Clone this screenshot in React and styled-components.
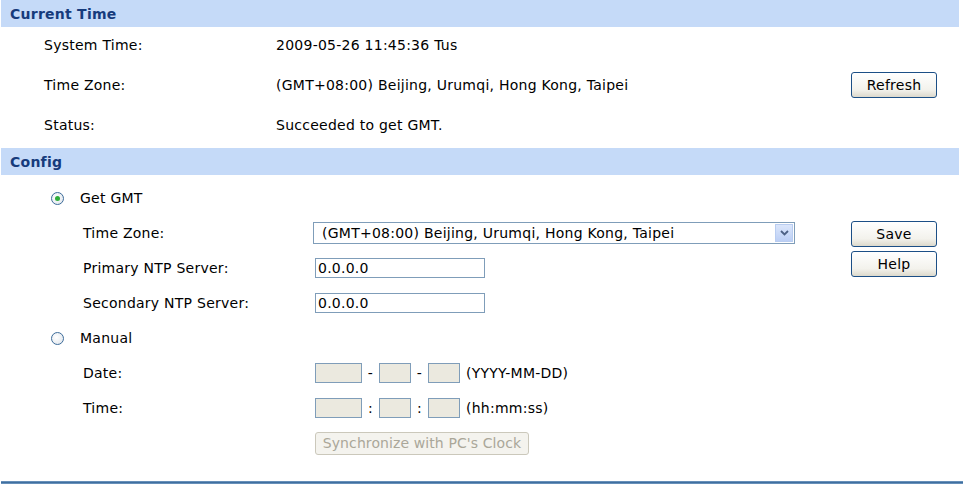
import styled, { createGlobalStyle } from "styled-components";

const GlobalStyle = createGlobalStyle`
  body {
    margin: 0;
    background: #ffffff;
    font-family: "DejaVu Sans", Verdana, sans-serif;
    font-size: 14px;
    letter-spacing: 0.25px;
    color: #000000;
  }
`;

const Page = styled.div`
  width: 964px;
  height: 488px;
  overflow: hidden;
`;

const SectionHeader = styled.div`
  height: 27px;
  margin: 0 5px 0 1px;
  padding-left: 9px;
  display: flex;
  align-items: center;
  background: #c5daf8;
  color: #163b7c;
  font-weight: bold;
  font-size: 14px;
`;

const InfoGrid = styled.div`
  display: grid;
  grid-template-columns: 232px 1fr 86px;
  grid-auto-rows: 26px;
  row-gap: 14px;
  align-items: center;
  padding: 5px 27px 10px 44px;
`;

const Cell = styled.div`
  white-space: nowrap;
`;

const Button = styled.button`
  width: ${(p) => p.$width || 86}px;
  height: ${(p) => p.$height || 26}px;
  padding: 0;
  border: 1px solid #1c4f86;
  border-radius: 3px;
  background: linear-gradient(#ffffff, #f3f2ec 70%, #dcd9cc);
  font-family: "DejaVu Sans", Verdana, sans-serif;
  font-size: 14px;
  letter-spacing: 0.25px;
  color: #000000;
`;

const DisabledButton = styled.button`
  width: 214px;
  height: 23px;
  padding: 0;
  border: 1px solid #cbc8bb;
  border-radius: 3px;
  background: #f4f3ee;
  color: #aaa799;
  font-family: "DejaVu Sans", Verdana, sans-serif;
  font-size: 14px;
  letter-spacing: 0.1px;
  white-space: nowrap;
`;

const ConfigBody = styled.div`
  display: flex;
  padding: 11px 27px 0 0;
`;

const ConfigMain = styled.div`
  flex: 1;
  display: grid;
  grid-template-columns: 264px 1fr;
  grid-auto-rows: 24px;
  row-gap: 11px;
  align-items: center;
  padding-left: 51px;
`;

const SideButtons = styled.div`
  display: flex;
  flex-direction: column;
  gap: 4px;
  padding-top: 35px;
`;

const RadioRow = styled.label`
  grid-column: 1 / -1;
  display: flex;
  align-items: center;
  gap: 16px;
`;

const Radio = styled.span`
  width: 11px;
  height: 11px;
  border-radius: 50%;
  border: 1px solid #3d6c9a;
  background: radial-gradient(circle at 40% 40%, #ffffff, #dde3ea);
  display: flex;
  align-items: center;
  justify-content: center;

  &::after {
    content: "";
    width: 5px;
    height: 5px;
    border-radius: 50%;
    background: ${(p) => (p.$checked ? "#2fae3a" : "transparent")};
  }
`;

const SubLabel = styled.div`
  padding-left: 32px;
  white-space: nowrap;
`;

const Control = styled.div`
  display: flex;
  align-items: center;
  white-space: nowrap;
`;

const SelectBox = styled.div`
  width: 482px;
  height: 22px;
  margin-left: -2px;
  box-sizing: border-box;
  border: 1px solid #7f9db9;
  background: #ffffff;
  display: flex;
  align-items: center;
  justify-content: space-between;
  padding: 0 1px 0 8px;
`;

const SelectArrow = styled.span`
  width: 18px;
  height: 18px;
  border: 1px solid #b9cdf1;
  box-sizing: border-box;
  background: linear-gradient(#dbe6fb, #bccff5);
  display: flex;
  align-items: center;
  justify-content: center;
`;

const TextInput = styled.input`
  width: ${(p) => p.$width || 170}px;
  height: 20px;
  box-sizing: border-box;
  margin: 0;
  border: 1px solid #7f9db9;
  background: ${(p) => (p.disabled ? "#ebe9df" : "#ffffff")};
  padding: 0 2px;
  font-family: "DejaVu Sans", Verdana, sans-serif;
  font-size: 14px;
  letter-spacing: 0.25px;
  color: #000000;
`;

const Sep = styled.span`
  width: 17px;
  text-align: center;
`;

const Hint = styled.span`
  margin-left: 6px;
`;

const Divider = styled.div`
  margin: 26px 1px 0 1px;
  height: 3px;
  background: linear-gradient(#7a9fc6, #3f6f9f 50%, #7a9fc6);
`;

function Chevron() {
  return (
    <svg width="9" height="6" viewBox="0 0 9 6">
      <path d="M1 1l3.5 3.5L8 1" fill="none" stroke="#4d6185" strokeWidth="1.8" />
    </svg>
  );
}

export default function App() {
  return (
    <Page>
      <GlobalStyle />
      <SectionHeader>Current Time</SectionHeader>
      <InfoGrid>
        <Cell>System Time:</Cell>
        <Cell>2009-05-26 11:45:36 Tus</Cell>
        <div />
        <Cell>Time Zone:</Cell>
        <Cell>(GMT+08:00) Beijing, Urumqi, Hong Kong, Taipei</Cell>
        <Button>Refresh</Button>
        <Cell>Status:</Cell>
        <Cell>Succeeded to get GMT.</Cell>
        <div />
      </InfoGrid>

      <SectionHeader>Config</SectionHeader>
      <ConfigBody>
        <ConfigMain>
          <RadioRow>
            <Radio $checked />
            Get GMT
          </RadioRow>
          <SubLabel>Time Zone:</SubLabel>
          <Control>
            <SelectBox>
              (GMT+08:00) Beijing, Urumqi, Hong Kong, Taipei
              <SelectArrow>
                <Chevron />
              </SelectArrow>
            </SelectBox>
          </Control>
          <SubLabel>Primary NTP Server:</SubLabel>
          <Control>
            <TextInput defaultValue="0.0.0.0" />
          </Control>
          <SubLabel>Secondary NTP Server:</SubLabel>
          <Control>
            <TextInput defaultValue="0.0.0.0" />
          </Control>
          <RadioRow>
            <Radio />
            Manual
          </RadioRow>
          <SubLabel>Date:</SubLabel>
          <Control>
            <TextInput $width={47} disabled />
            <Sep>-</Sep>
            <TextInput $width={32} disabled />
            <Sep>-</Sep>
            <TextInput $width={32} disabled />
            <Hint>(YYYY-MM-DD)</Hint>
          </Control>
          <SubLabel>Time:</SubLabel>
          <Control>
            <TextInput $width={47} disabled />
            <Sep>:</Sep>
            <TextInput $width={32} disabled />
            <Sep>:</Sep>
            <TextInput $width={32} disabled />
            <Hint>(hh:mm:ss)</Hint>
          </Control>
          <div />
          <Control>
            <DisabledButton disabled>Synchronize with PC's Clock</DisabledButton>
          </Control>
        </ConfigMain>
        <SideButtons>
          <Button>Save</Button>
          <Button>Help</Button>
        </SideButtons>
      </ConfigBody>
      <Divider />
    </Page>
  );
}
